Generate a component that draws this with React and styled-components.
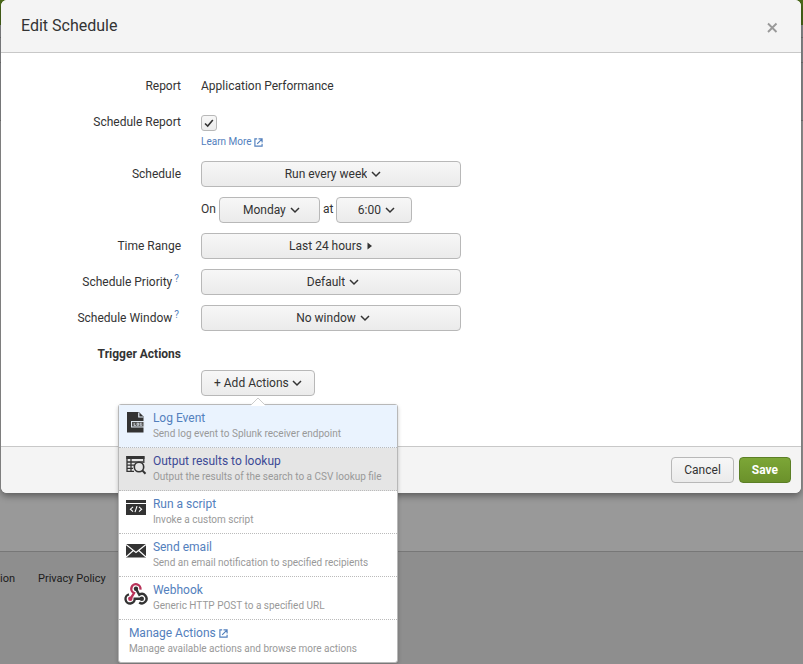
import React, { useState } from "react";
import styled, { createGlobalStyle, css } from "styled-components";

const GlobalStyle = createGlobalStyle`
  *, *::before, *::after { box-sizing: border-box; }
  body {
    margin: 0;
    background: #999;
    color: #333;
    font: 12px/20px Roboto, "Liberation Sans", sans-serif;
  }
  button, select, input { font: inherit; color: inherit; }
  svg { flex-shrink: 0; }
`;

/* ---------- page behind the dialog ---------- */

const Page = styled.div`
  position: relative;
  display: flex;
  flex-direction: column;
  min-height: 100vh;
  overflow: hidden;
`;

const TopBar = styled.div`
  height: 25px;
  background: #4c6b1a;
`;

const Band = styled.div`
  height: ${(p) => p.$height}px;
  border-bottom: 1px solid #777;
  background: #8e9092;
`;

const PageBody = styled.div`
  flex: 1;
`;

const PageFooter = styled.footer`
  display: flex;
  gap: 23px;
  height: 113px;
  padding-top: 17px;
  border-top: 1px solid #777;
  background: #8e8e8e;
  font-size: 11px;
`;

const FooterLink = styled.a`
  color: #1c1c1c;
  text-decoration: none;
  white-space: nowrap;
`;

const ClippedSlot = styled.span`
  display: flex;
  justify-content: flex-end;
  width: 15px;
  overflow: hidden;
`;

/* ---------- dialog ---------- */

const Dialog = styled.section`
  position: absolute;
  top: 0;
  left: 1px;
  right: 2px;
  border-radius: 6px;
  background: #fff;
  box-shadow: 0 3px 7px rgba(0, 0, 0, 0.4);
`;

const DialogHeader = styled.header`
  display: flex;
  align-items: center;
  justify-content: space-between;
  height: 53px;
  padding: 0 23px 0 20px;
  border-bottom: 1px solid #c8c8c8;
  border-radius: 6px 6px 0 0;
  background: #f4f4f4;
`;

const Title = styled.h1`
  margin: 0;
  font-size: 16px;
  font-weight: 400;
`;

const CloseButton = styled.button`
  display: flex;
  margin-top: 4px;
  padding: 0;
  border: 0;
  background: none;
  color: #999;
  cursor: pointer;
`;

const Form = styled.form`
  display: flex;
  flex-direction: column;
`;

const FormBody = styled.div`
  display: flex;
  flex-direction: column;
  gap: 10px;
  padding: 20px 20px 50px;
`;

const Row = styled.div`
  display: grid;
  grid-template-columns: 160px minmax(0, 260px);
  column-gap: 20px;
  line-height: 26px;
`;

const rowLabel = css`
  grid-column: 1;
  text-align: right;
  white-space: nowrap;
`;

const Label = styled.label`${rowLabel}`;
const LabelText = styled.span`${rowLabel}`;

const SectionTitle = styled.h2`
  ${rowLabel}
  margin: 0 0 3px;
  font-size: 12px;
  font-weight: 700;
`;

const Help = styled.a`
  display: inline-block;
  margin: 0 2px;
  color: #5380bd;
  font-size: 10px;
  line-height: 12px;
  vertical-align: 4px;
  text-decoration: none;
`;

const Controls = styled.div`
  grid-column: 2;
  display: flex;
  flex-wrap: wrap;
  gap: 3px;
  line-height: 24px;
`;

const ActionControls = styled(Controls)`
  grid-row: 2;
`;

const Stack = styled.div`
  display: flex;
  flex-direction: column;
  align-items: flex-start;
  gap: 2px;
  padding-top: 6px;
`;

const Checkbox = styled.input`
  appearance: none;
  width: 16px;
  height: 16px;
  margin: 0;
  border: 1px solid #b8b8b8;
  border-radius: 3px;
  background: linear-gradient(#f7f7f7, #ececec);
  &:checked {
    background: url("data:image/svg+xml,%3Csvg xmlns='http://www.w3.org/2000/svg' viewBox='0 0 14 14'%3E%3Cpath d='M3 7.5 5.7 10 10.8 4' fill='none' stroke='%23333' stroke-width='1.6'/%3E%3C/svg%3E"),
      linear-gradient(#f7f7f7, #ececec);
  }
`;

const LearnMore = styled.a`
  display: inline-flex;
  align-items: center;
  gap: 2px;
  color: #5380bd;
  font-size: 10px;
  line-height: 18px;
  text-decoration: none;
`;

const controlFace = css`
  display: inline-flex;
  align-items: center;
  justify-content: center;
  height: 26px;
  border: 1px solid #b8b8b8;
  border-radius: 4px;
  background: linear-gradient(#f7f7f7, #ebebeb);
  line-height: 20px;
  white-space: nowrap;
  cursor: pointer;
`;

const SelectFace = styled.span`
  ${controlFace}
  gap: 4px;
  width: ${(p) => p.$width || "100%"};
  padding-left: 4px;
`;

const NativeSelect = styled.select`
  appearance: none;
  field-sizing: content;
  padding: 0;
  border: 0;
  outline: 0;
  background: none;
  cursor: pointer;
`;

const Button = styled.button`
  ${controlFace}
  gap: 3px;
  width: ${(p) => p.$width || "auto"};
  padding: 0 12px;
  ${(p) =>
    p.$primary &&
    css`
      border-color: #5b7f26;
      background: linear-gradient(#7ca637, #6b912b);
      color: #fff;
      font-weight: 700;
    `}
`;

const DialogFooter = styled.footer`
  display: flex;
  justify-content: flex-end;
  gap: 5px;
  height: 47px;
  padding: 10px 10px 0;
  border-top: 1px solid #c8c8c8;
  border-radius: 0 0 6px 6px;
  background: #f4f4f4;
`;

/* ---------- actions menu ---------- */

const MenuAnchor = styled.div`
  position: relative;
  display: flex;
`;

const Menu = styled.div`
  position: absolute;
  top: 34px;
  left: 50%;
  z-index: 1;
  width: 280px;
  margin-left: -140px;
  border: 1px solid #b8b8b8;
  border-radius: 3px;
  background: #fff;
  box-shadow: 0 2px 4px rgba(0, 0, 0, 0.2);
`;

const Arrow = styled.svg`
  position: absolute;
  top: -8px;
  left: 50%;
  margin-left: -8px;
`;

const MenuItem = styled.a`
  display: flex;
  align-items: flex-start;
  gap: 6px;
  height: 43px;
  padding: 5px 6px 0 ${(p) => (p.$plain ? 10 : 6)}px;
  border-bottom: 1px dotted #bbb;
  background: ${(p) => p.$background || "transparent"};
  color: ${(p) => p.$color || "#5380bd"};
  text-decoration: none;
  white-space: nowrap;
  &:last-child {
    height: 42px;
    border-bottom: 0;
  }
`;

const ItemText = styled.span`
  display: flex;
  flex-direction: column;
`;

const ItemName = styled.span`
  display: flex;
  align-items: center;
  gap: 3px;
  font-size: 12px;
  line-height: 16px;
`;

const ItemNote = styled.span`
  color: #999;
  font-size: 10px;
  line-height: 16px;
`;

/* ---------- drawings ---------- */

const Chevron = () => (
  <svg width="10" height="8" viewBox="0 0 10 8" fill="none" stroke="#333" strokeWidth="1.5" aria-hidden="true">
    <path d="M1 2 5 6 9 2" />
  </svg>
);

const RightArrow = () => (
  <svg width="8" height="8" viewBox="0 0 8 8" aria-hidden="true">
    <path d="M2.5 .5 7 4 2.5 7.5Z" fill="#333" />
  </svg>
);

const External = () => (
  <svg width="9" height="9" viewBox="0 0 10 10" fill="none" stroke="currentColor" strokeWidth="1.3" aria-hidden="true">
    <path d="M3.5 1H1V9H9V6.5M3.5 6.5 8.5 1.5M5 1H9V5" />
  </svg>
);

const CloseIcon = () => (
  <svg width="12" height="12" viewBox="0 0 12 12" fill="none" stroke="currentColor" strokeWidth="1.9" aria-hidden="true">
    <path d="M2 1.5 10.5 10M10.5 1.5 2 10" />
  </svg>
);

const ItemIcon = ({ children }) => (
  <svg width="22" height="24" viewBox="0 0 22 24" aria-hidden="true">{children}</svg>
);

const LogIcon = () => (
  <ItemIcon>
    <path d="M2 2H14L18.5 6.5V22.5H2Z" fill="#333" />
    <path d="M13.8 2.5V7H18.3" fill="none" stroke="#eaf3fe" strokeWidth="1.2" />
    <rect x="6.5" y="11.5" width="12.5" height="5.5" fill="#555" stroke="#dfe7f0" />
    <path d="M9.2 13V15.5H10.8M12.1 13.2H13.6V15.3H12.1ZM16.8 13.2H15.2V15.3H16.8V14.4" fill="none" stroke="#dfe7f0" strokeWidth=".8" />
  </ItemIcon>
);

const LookupIcon = () => (
  <ItemIcon>
    <path d="M2 4H18.8V10M2 3V18.3H9M6 6V18.3M2 9H18M2 12.2H9M2 15.3H8" fill="none" stroke="#333" strokeWidth="1.3" />
    <path d="M1.3 3H19.5V6H1.3Z" fill="#333" />
    <circle cx="14" cy="14" r="4.7" fill="#e5e5e5" stroke="#333" strokeWidth="1.6" />
    <path d="M17.3 17.4 20.5 20.7" stroke="#333" strokeWidth="2" />
  </ItemIcon>
);

const ScriptIcon = () => (
  <ItemIcon>
    <path d="M1 4H21V7H1ZM1 8H21V19H1Z" fill="#333" />
    <path d="M8 10.8 5.4 13.2 8 15.6M14 10.8 16.6 13.2 14 15.6M12 10.2 10 16.2" fill="none" stroke="#fff" strokeWidth="1.1" />
  </ItemIcon>
);

const MailIcon = () => (
  <ItemIcon>
    <path d="M1 5H21V18.5H1Z" fill="#333" />
    <path d="M1 5.5 11 13.5 21 5.5M1 18 8.3 11.5M21 18 13.7 11.5" fill="none" stroke="#fff" strokeWidth="1.1" />
  </ItemIcon>
);

const WebhookIcon = () => (
  <svg width="24" height="24" viewBox="0 0 24 24" fill="none" strokeWidth="2.4" aria-hidden="true">
    <path d="M6.5 16.8 10 11A4.6 4.6 0 1 1 16.4 7.6" stroke="#b83259" />
    <path d="M12 6.8 15.3 12.8A4.6 4.6 0 1 1 15.2 20.4" stroke="#333" />
    <path d="M17.8 16.8H10.7A4.6 4.6 0 1 1 5 12.4" stroke="#333" />
    <circle cx="12" cy="6.8" r="2.2" fill="#333" />
    <circle cx="6.3" cy="16.8" r="2.2" fill="#b83259" />
    <circle cx="17.8" cy="16.8" r="2.2" fill="#333" />
  </svg>
);

const WebhookSlot = styled.span`
  display: flex;
  margin: 0 -1px;
`;

const ACTIONS = [
  { name: "Log Event", note: "Send log event to Splunk receiver endpoint", icon: <LogIcon />, background: "#eaf3fe" },
  { name: "Output results to lookup", note: "Output the results of the search to a CSV lookup file", icon: <LookupIcon />, background: "#e5e5e5", color: "#3c4a96" },
  { name: "Run a script", note: "Invoke a custom script", icon: <ScriptIcon /> },
  { name: "Send email", note: "Send an email notification to specified recipients", icon: <MailIcon /> },
  { name: "Webhook", note: "Generic HTTP POST to a specified URL", icon: <WebhookSlot><WebhookIcon /></WebhookSlot> },
];

function Select({ id, width, options }) {
  return (
    <SelectFace $width={width}>
      <NativeSelect id={id}>
        {options.map((option) => <option key={option}>{option}</option>)}
      </NativeSelect>
      <Chevron />
    </SelectFace>
  );
}

export default function App() {
  const [scheduled, setScheduled] = useState(true);
  return (
    <Page>
      <GlobalStyle />
      <TopBar />
      <Band $height={13} />
      <Band $height={25} />
      <Band $height={58} />
      <PageBody />
      <PageFooter>
        <ClippedSlot><FooterLink href="#documentation">ion</FooterLink></ClippedSlot>
        <FooterLink href="#privacy">Privacy Policy</FooterLink>
      </PageFooter>

      <Dialog role="dialog" aria-labelledby="dialog-title">
        <DialogHeader>
          <Title id="dialog-title">Edit Schedule</Title>
          <CloseButton type="button" aria-label="Close"><CloseIcon /></CloseButton>
        </DialogHeader>
        <Form onSubmit={(event) => event.preventDefault()}>
          <FormBody>
            <Row>
              <LabelText>Report</LabelText>
              <span>Application Performance</span>
            </Row>
            <Row>
              <Label htmlFor="scheduled">Schedule Report</Label>
              <Stack>
                <Checkbox id="scheduled" type="checkbox" checked={scheduled} onChange={(event) => setScheduled(event.target.checked)} />
                <LearnMore href="#learn-more">Learn More<External /></LearnMore>
              </Stack>
            </Row>
            <Row>
              <Label htmlFor="schedule">Schedule</Label>
              <Select id="schedule" options={["Run every week", "Run every day"]} />
            </Row>
            <Row>
              <Controls>
                <label htmlFor="day">On</label>
                <Select id="day" width="101px" options={["Monday", "Tuesday"]} />
                <label htmlFor="hour">at</label>
                <Select id="hour" width="76px" options={["6:00", "7:00"]} />
              </Controls>
            </Row>
            <Row>
              <Label htmlFor="range">Time Range</Label>
              <Button id="range" type="button" $width="100%">Last 24 hours<RightArrow /></Button>
            </Row>
            <Row>
              <LabelText><label htmlFor="priority">Schedule Priority</label><Help href="#priority-help">?</Help></LabelText>
              <Select id="priority" options={["Default", "Higher"]} />
            </Row>
            <Row>
              <LabelText><label htmlFor="window">Schedule Window</label><Help href="#window-help">?</Help></LabelText>
              <Select id="window" options={["No window", "5 minutes"]} />
            </Row>
            <Row>
              <SectionTitle>Trigger Actions</SectionTitle>
              <ActionControls>
                <MenuAnchor>
                  <Button type="button" aria-haspopup="true" aria-expanded="true">+ Add Actions<Chevron /></Button>
                  <Menu>
                    <Arrow width="16" height="9" viewBox="0 0 16 9" aria-hidden="true">
                      <path d="M1 8 8 1 15 8V9H1Z" fill="#fff" />
                      <path d="M1 8 8 1 15 8" fill="none" stroke="#ccc" />
                    </Arrow>
                    {ACTIONS.map((action) => (
                      <MenuItem key={action.name} href="#add-action" $background={action.background} $color={action.color}>
                        {action.icon}
                        <ItemText>
                          <ItemName>{action.name}</ItemName>
                          <ItemNote>{action.note}</ItemNote>
                        </ItemText>
                      </MenuItem>
                    ))}
                    <MenuItem href="#manage-actions" $plain>
                      <ItemText>
                        <ItemName>Manage Actions<External /></ItemName>
                        <ItemNote>Manage available actions and browse more actions</ItemNote>
                      </ItemText>
                    </MenuItem>
                  </Menu>
                </MenuAnchor>
              </ActionControls>
            </Row>
          </FormBody>
          <DialogFooter>
            <Button type="button">Cancel</Button>
            <Button type="submit" $primary>Save</Button>
          </DialogFooter>
        </Form>
      </Dialog>
    </Page>
  );
}
